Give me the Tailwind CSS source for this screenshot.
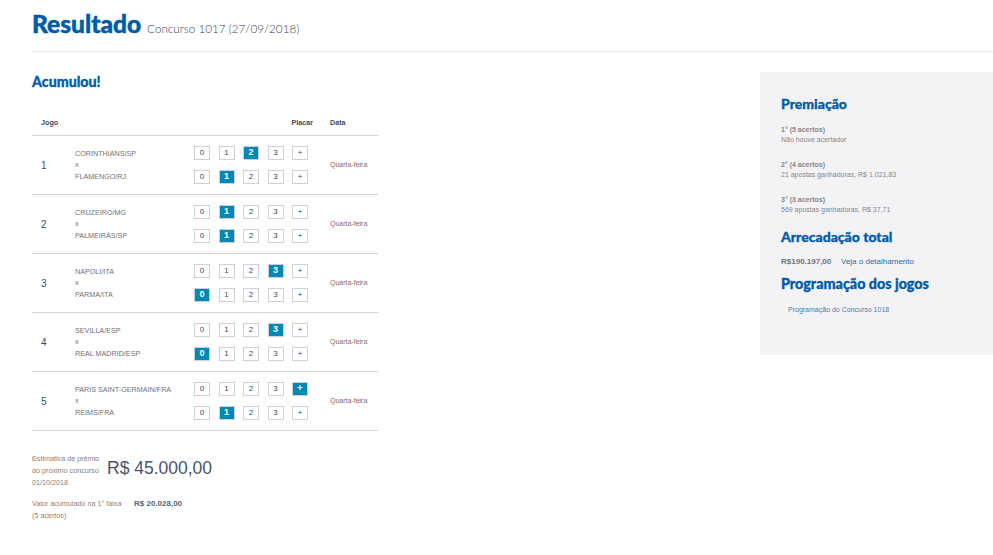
<!DOCTYPE html>
<html lang="pt-BR">
<head>
    <meta charset="UTF-8">
    <title>Resultado</title>
    <script src="https://cdn.jsdelivr.net/npm/@tailwindcss/browser@4"></script>
</head>
<body class="bg-white font-['Liberation_Sans',Arial,sans-serif] text-[7.2px] text-[#6b7280] overflow-hidden">
    <div class="w-[993px] h-[555px] pl-8">
        <!-- Title -->
        <div class="h-[52px] border-b border-[#e6e6e9] flex items-start pt-[9px]">
            <h1 class="font-['Lato',sans-serif] font-black text-[24.5px] leading-[30px] text-[#005ca9] [-webkit-text-stroke:0.5px_#005ca9]">Resultado</h1>
            <span class="font-['Lato',sans-serif] font-light text-[11.7px] leading-[30px] text-[#36455a] ml-[6px] pt-[4px]">Concurso 1017 (27/09/2018)</span>
        </div>
        <div class="flex justify-between pt-5">
            <!-- Left column -->
            <div class="w-[346px]">
                <h2 class="font-['Lato',sans-serif] font-black text-[14.2px] leading-[20px] text-[#005ca9] [-webkit-text-stroke:0.3px_#005ca9]">Acumulou!</h2>
                <div class="flex h-[44px] pt-[25px] font-bold text-[#444c5c] leading-[12px] border-b border-[#d4d4dc]">
                    <span class="pl-[9px] w-[259.5px]">Jogo</span>
                    <span class="w-[38.5px]">Placar</span>
                    <span>Data</span>
                </div>
                <div id="jogos"></div>
                <!-- Estimativa -->
                <div class="flex mt-[22px] leading-[12px] text-[#8a8078]">
                    <div class="w-[75px]">Estimativa de prêmio<br>do próximo concurso<br>01/10/2018</div>
                    <div class="text-[17.5px] leading-[30px] text-[#46566e]">R$ 45.000,00</div>
                </div>
                <div class="flex mt-[9px] leading-[12px] text-[#8a8078]">
                    <div class="w-[102px]">Valor acumulado na 1° faixa<br>(5 acertos)</div>
                    <div class="font-bold text-[8px] text-[#5a6472]">R$ 20.028,00</div>
                </div>
            </div>
            <!-- Sidebar -->
            <aside class="w-[233px] h-[283px] bg-[#f3f3f6] px-[21px] pt-[23px] text-[7px] leading-[10px] text-[#85858c]">
                <h3 class="font-['Lato',sans-serif] font-black text-[14px] leading-[18px] text-[#005ca9] [-webkit-text-stroke:0.3px_#005ca9]">Premiação</h3>
                <p class="mt-[12px] font-bold">1° (5 acertos)</p>
                <p>Não houve acertador</p>
                <p class="mt-[15px] font-bold">2° (4 acertos)</p>
                <p>21 apostas ganhadoras, R$ 1.021,83</p>
                <p class="mt-[15px] font-bold">3° (3 acertos)</p>
                <p>569 apostas ganhadoras, R$ 37,71</p>
                <h3 class="font-['Lato',sans-serif] font-black text-[14px] leading-[18px] text-[#005ca9] mt-[13px] [-webkit-text-stroke:0.3px_#005ca9]">Arrecadação total</h3>
                <p class="mt-[11px] flex text-[8px]">
                    <span class="font-bold text-[#6b7280] w-[60px]">R$190.197,00</span>
                    <span class="text-[#2f6ca3]">Veja o detalhamento</span>
                </p>
                <h3 class="font-['Lato',sans-serif] font-black text-[14.3px] leading-[18px] text-[#005ca9] mt-[8px] [-webkit-text-stroke:0.3px_#005ca9]">Programação dos jogos</h3>
                <p class="mt-[12px] pl-[7px] text-[#4f78a8]">Programação do Concurso 1018</p>
            </aside>
        </div>
    </div>
    <script>
    const jogos = [
        ['CORINTHIANS/SP', 2, 'FLAMENGO/RJ', 1],
        ['CRUZEIRO/MG', 1, 'PALMEIRAS/SP', 1],
        ['NAPOLI/ITA', 3, 'PARMA/ITA', 0],
        ['SEVILLA/ESP', 3, 'REAL MADRID/ESP', 0],
        ['PARIS SAINT-GERMAIN/FRA', 4, 'REIMS/FRA', 1],
    ];
    const off = 'w-[16px] h-[14px] flex items-center justify-center border border-[#cfd0d4] text-[8px] text-[#3f4856] bg-white';
    const on = 'w-[16px] h-[14px] flex items-center justify-center border border-[#cfd0d4] text-[9px] font-bold text-white bg-[#0088b8]';
    function placar(gols) {
        return '<div class="flex gap-[8.5px]">' + ['0', '1', '2', '3', '+'].map((v, i) =>
            `<span class="${i === gols ? on : off}">${v}</span>`).join('') + '</div>';
    }
    document.getElementById('jogos').innerHTML = jogos.map((j, i) => `
        <div class="flex items-center h-[59px] border-b border-[#d4d4dc]">
            <span class="w-[43px] pl-[9px] text-[10px] text-[#35506e]">${i + 1}</span>
            <div class="w-[119px] leading-[11.5px] text-[#6f6f78]">
                <div>${j[0]}</div><div>x</div><div>${j[2]}</div>
            </div>
            <div class="w-[136px] flex flex-col gap-[10px]">${placar(j[1])}${placar(j[3])}</div>
            <span class="text-[7px] text-[#8a6a60]">Quarta-feira</span>
        </div>`).join('');
    </script>
</body>
</html>
